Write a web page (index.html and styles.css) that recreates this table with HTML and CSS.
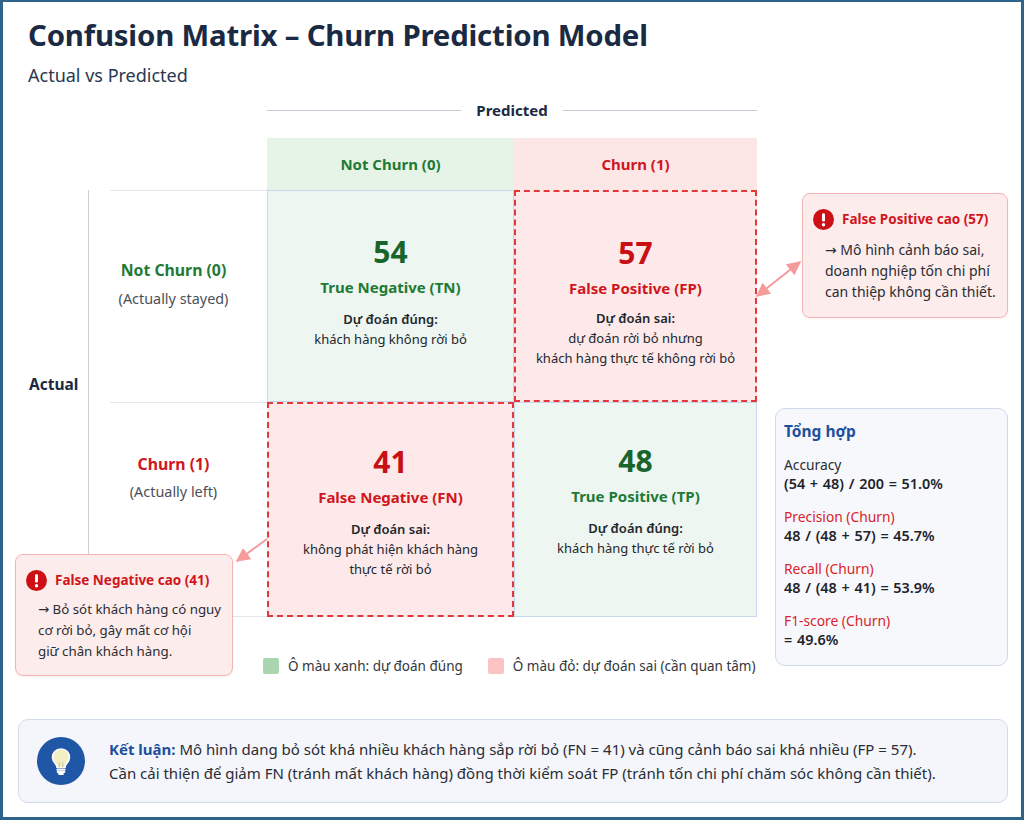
FILE: index.html
```html
<!DOCTYPE html>
<html lang="vi">
<head>
<meta charset="utf-8">
<title>Confusion Matrix – Churn Prediction Model</title>
<link rel="stylesheet" href="styles.css">
</head>
<body>
<div class="frame">
  <header class="head">
    <h1 class="title">Confusion Matrix – Churn Prediction Model</h1>
    <p class="subtitle">Actual vs Predicted</p>
  </header>

  <section class="board">
    <div class="pred-axis">
      <span class="axis-line"></span>
      <span class="axis-label">Predicted</span>
      <span class="axis-line"></span>
    </div>

    <div class="col-head col-neg">Not Churn (0)</div>
    <div class="col-head col-pos">Churn (1)</div>

    <div class="actual-label">Actual</div>

    <div class="row-axis">
      <div class="row-head row-neg">
        <div class="row-title green">Not Churn (0)</div>
        <div class="row-sub">(Actually stayed)</div>
      </div>
      <div class="row-head row-pos">
        <div class="row-title red">Churn (1)</div>
        <div class="row-sub">(Actually left)</div>
      </div>
    </div>

    <div class="cell cell-ok cell-tn">
      <div class="num green-dark">54</div>
      <div class="cell-label green">True Negative (TN)</div>
      <div class="desc"><span class="desc-head">Dự đoán đúng:</span><br>khách hàng không rời bỏ</div>
    </div>
    <div class="cell cell-bad cell-fp">
      <div class="num red-dark">57</div>
      <div class="cell-label red">False Positive (FP)</div>
      <div class="desc desc-tight"><span class="desc-head">Dự đoán sai:</span><br>dự đoán rời bỏ nhưng<br>khách hàng thực tế không rời bỏ</div>
    </div>
    <div class="cell cell-bad cell-fn">
      <div class="num red-dark">41</div>
      <div class="cell-label red">False Negative (FN)</div>
      <div class="desc"><span class="desc-head">Dự đoán sai:</span><br>không phát hiện khách hàng<br>thực tế rời bỏ</div>
    </div>
    <div class="cell cell-ok cell-tp">
      <div class="num green-dark">48</div>
      <div class="cell-label green">True Positive (TP)</div>
      <div class="desc"><span class="desc-head">Dự đoán đúng:</span><br>khách hàng thực tế rời bỏ</div>
    </div>

    <aside class="callout callout-fp">
      <div class="callout-title">
        <svg class="warn" viewBox="0 0 20 20" aria-hidden="true"><circle cx="10" cy="10" r="10" fill="#cc1016"/><rect x="8.6" y="4" width="2.8" height="8" rx="1.2" fill="#fff"/><circle cx="10" cy="15" r="1.6" fill="#fff"/></svg>
        <span>False Positive cao (57)</span>
      </div>
      <p class="callout-body">→ Mô hình cảnh báo sai,<br>doanh nghiệp tốn chi phí<br>can thiệp không cần thiết.</p>
    </aside>

    <aside class="summary">
      <h2 class="summary-title">Tổng hợp</h2>
      <div class="metric">
        <div class="metric-name">Accuracy</div>
        <div class="metric-val">(54 + 48) / 200 = 51.0%</div>
      </div>
      <div class="metric">
        <div class="metric-name red-soft">Precision (Churn)</div>
        <div class="metric-val">48 / (48 + 57) = 45.7%</div>
      </div>
      <div class="metric">
        <div class="metric-name red-soft">Recall (Churn)</div>
        <div class="metric-val">48 / (48 + 41) = 53.9%</div>
      </div>
      <div class="metric">
        <div class="metric-name red-soft">F1-score (Churn)</div>
        <div class="metric-val">= 49.6%</div>
      </div>
    </aside>

    <div class="legend">
      <span class="legend-item"><span class="swatch swatch-green"></span>Ô màu xanh: dự đoán đúng</span>
      <span class="legend-item"><span class="swatch swatch-red"></span>Ô màu đỏ: dự đoán sai (cần quan tâm)</span>
    </div>

    <aside class="callout callout-fn">
      <div class="callout-title">
        <svg class="warn" viewBox="0 0 20 20" aria-hidden="true"><circle cx="10" cy="10" r="10" fill="#cc1016"/><rect x="8.6" y="4" width="2.8" height="8" rx="1.2" fill="#fff"/><circle cx="10" cy="15" r="1.6" fill="#fff"/></svg>
        <span>False Negative cao (41)</span>
      </div>
      <p class="callout-body">→ Bỏ sót khách hàng có nguy<br>cơ rời bỏ, gây mất cơ hội<br>giữ chân khách hàng.</p>
    </aside>

    <svg class="arrows" viewBox="0 0 1018 577" aria-hidden="true">
      <defs>
        <marker id="ah" viewBox="0 0 10 10" refX="9" refY="5" markerWidth="7" markerHeight="7" orient="auto-start-reverse">
          <path d="M0 0 L10 5 L0 10 z" fill="#f59b9b"/>
        </marker>
      </defs>
      <line x1="754" y1="196" x2="797" y2="162" stroke="#f59b9b" stroke-width="2" marker-start="url(#ah)" marker-end="url(#ah)"/>
      <line x1="264" y1="439" x2="234" y2="461" stroke="#f59b9b" stroke-width="2" marker-end="url(#ah)"/>
    </svg>
  </section>

  <section class="conclusion">
    <div class="bulb">
      <svg viewBox="0 0 48 48" aria-hidden="true">
        <circle cx="24" cy="24" r="24" fill="#1f56a6"/>
        <path d="M24 12 C18.8 12 15.5 15.8 15.5 20.2 C15.5 23.4 17.3 25.3 18.6 26.9 C19.6 28.1 20 29.3 20 30.6 L28 30.6 C28 29.3 28.4 28.1 29.4 26.9 C30.7 25.3 32.5 23.4 32.5 20.2 C32.5 15.8 29.2 12 24 12 Z" fill="#f2efc4" stroke="#ffffff" stroke-width="1.6" stroke-linejoin="round"/>
        <path d="M22.3 30.4 L22.3 25.5 M25.7 30.4 L25.7 25.5" stroke="#c9c08a" stroke-width="1" fill="none"/>
        <path d="M20.2 32.8 H27.8 M20.6 35 H27.4" stroke="#ffffff" stroke-width="1.8" stroke-linecap="round"/>
        <path d="M22 37 H26" stroke="#ffffff" stroke-width="1.8" stroke-linecap="round"/>
      </svg>
    </div>
    <p class="conclusion-text"><strong class="blue">Kết luận:</strong> Mô hình dang bỏ sót khá nhiều khách hàng sắp rời bỏ (FN = 41) và cũng cảnh báo sai khá nhiều (FP = 57).<br>Cần cải thiện để giảm FN (tránh mất khách hàng) đồng thời kiểm soát FP (tránh tốn chi phí chăm sóc không cần thiết).</p>
  </section>
</div>
</body>
</html>
```

FILE: styles.css
```css
* { box-sizing: border-box; }

html, body {
  margin: 0;
  padding: 0;
  background: #ffffff;
}

body {
  font-family: "Noto Sans", "Open Sans", "DejaVu Sans", sans-serif;
  color: #222831;
}

.frame {
  width: 1024px;
  height: 820px;
  border: 3px solid #2e6489;
  border-top-width: 2px;
  background: #ffffff;
  overflow: hidden;
}

/* Header */
.head {
  padding: 13px 0 0 25px;
}

.title {
  margin: 0;
  font-size: 29.4px;
  line-height: 40px;
  font-weight: 700;
  color: #1a2a42;
  letter-spacing: -0.2px;
}

.subtitle {
  margin: 8px 0 0;
  font-size: 18px;
  line-height: 24px;
  color: #2a3850;
}

/* Board grid */
.board {
  position: relative;
  margin-top: 13px;
  display: grid;
  grid-template-columns: 85px 179px 247px 243px 18px 233px;
  grid-template-rows: 38px 52px 212px 215px 60px;
}

.pred-axis {
  grid-column: 3 / 5;
  grid-row: 1;
  align-self: start;
  height: 20px;
  display: flex;
  align-items: center;
  gap: 15px;
}

.axis-line {
  flex: 1;
  height: 1px;
  background: #c5ccd6;
}

.axis-label {
  font-size: 15px;
  font-weight: 700;
  line-height: 20px;
  color: #1a2a42;
}

.col-head {
  grid-row: 2;
  display: flex;
  align-items: center;
  justify-content: center;
  font-size: 15px;
  font-weight: 700;
}

.col-neg {
  grid-column: 3;
  background: #e6f3e7;
  color: #1e7a35;
}

.col-pos {
  grid-column: 4;
  background: #fde6e6;
  color: #d0161d;
}

.actual-label {
  grid-column: 1;
  grid-row: 3 / 5;
  align-self: start;
  margin-top: 183px;
  padding-left: 26px;
  font-size: 15.5px;
  font-weight: 700;
  line-height: 22px;
  color: #1a2a42;
}

.row-axis {
  grid-column: 2;
  grid-row: 3 / 5;
  border-left: 1px solid #c9ced6;
  display: grid;
  grid-template-rows: 212px 215px;
}

.row-head {
  margin-left: 21px;
  padding-right: 30px;
  border-top: 1px solid #e3e6eb;
  text-align: center;
}

.row-neg { padding-top: 68px; }
.row-pos {
  padding-top: 50px;
  border-bottom: 1px solid #e3e6eb;
}

.row-title {
  font-size: 15.8px;
  font-weight: 700;
  line-height: 22px;
}

.row-sub {
  margin-top: 7px;
  font-size: 14.4px;
  line-height: 22px;
  color: #4a4f57;
}

.row-pos .row-sub { margin-top: 6px; }

.green { color: #1e7a35; }
.green-dark { color: #17652c; }
.red { color: #d0161d; }
.red-dark { color: #c80f14; }
.red-soft { color: #d9232a; }
.blue { color: #1d4f9c; }

/* Cells */
.cell {
  text-align: center;
  padding-top: 43px;
}

.cell-fn,
.cell-tp { padding-top: 40px; }

.cell-ok {
  background: #edf6f0;
  border: 1px solid #c8d7ec;
}

.cell-bad {
  background: #fde9e9;
  border: 2px dashed #e3383a;
  position: relative;
  z-index: 1;
}

.cell-tn { grid-column: 3; grid-row: 3; }
.cell-fp { grid-column: 4; grid-row: 3; }
.cell-fn { grid-column: 3; grid-row: 4; }
.cell-tp { grid-column: 4; grid-row: 4; }

.num {
  font-size: 30px;
  line-height: 36px;
  font-weight: 700;
}

.cell-label {
  margin-top: 6px;
  font-size: 15px;
  line-height: 22px;
  font-weight: 700;
}

.desc {
  margin-top: 11px;
  font-size: 13px;
  line-height: 20px;
  color: #23272e;
}

.desc-tight { margin-top: 9px; }

.desc-head {
  font-weight: 600;
}

/* Callouts */
.callout {
  background: #fdecec;
  border: 1.5px solid #f4b4b4;
  border-radius: 8px;
  padding: 14px 0 0 10px;
  box-shadow: 0 1px 3px rgba(220, 80, 80, 0.08);
}

.callout-fp {
  grid-column: 6;
  grid-row: 3;
  align-self: start;
  margin-top: 3px;
  margin-left: 27px;
  height: 125px;
}

.callout-fn {
  position: absolute;
  left: 12px;
  top: 454px;
  width: 218px;
  height: 122px;
  z-index: 3;
}

.callout-title {
  display: flex;
  align-items: center;
  gap: 8px;
  font-size: 13.5px;
  line-height: 22px;
  font-weight: 700;
  color: #d0161d;
}

.warn {
  width: 21px;
  height: 21px;
  flex: none;
}

.callout-body {
  margin: 9px 0 0 12px;
  font-size: 14px;
  line-height: 21px;
  color: #2a2d33;
  white-space: nowrap;
}

.callout-fn .callout-body {
  margin-top: 8px;
  font-size: 13.3px;
}

/* Summary */
.summary {
  grid-column: 6;
  grid-row: 4 / 6;
  align-self: start;
  margin-top: 6px;
  height: 258px;
  background: #f6f8fc;
  border: 1.5px solid #cfd9ea;
  border-radius: 10px;
  padding: 12px 8px;
}

.summary-title {
  margin: 0;
  font-size: 15.5px;
  line-height: 20px;
  font-weight: 700;
  color: #1d4f9c;
}

.metric {
  margin-top: 14px;
}

.metric-name,
.metric-val {
  font-size: 13.8px;
  line-height: 19px;
}

.metric-name { color: #2a2d33; }
.metric-name.red-soft { color: #d9232a; }

.metric-val {
  font-size: 14.4px;
  font-weight: 600;
  color: #1f232a;
  word-spacing: 1px;
}

/* Legend */
.legend {
  grid-column: 3 / 6;
  grid-row: 5;
  padding-top: 37px;
  margin-left: -4px;
  display: flex;
  gap: 25px;
  font-size: 13.5px;
  line-height: 20px;
  color: #33373d;
}

.legend-item {
  display: flex;
  align-items: center;
  gap: 9px;
}

.swatch {
  width: 16px;
  height: 16px;
  border-radius: 2px;
}

.swatch-green { background: #a9d5b1; }
.swatch-red { background: #fbc4c4; }

/* Arrows overlay */
.arrows {
  position: absolute;
  left: 0;
  top: 0;
  width: 1018px;
  height: 577px;
  pointer-events: none;
  z-index: 4;
}

/* Conclusion */
.conclusion {
  margin: 42px 0 0 15px;
  width: 990px;
  height: 84px;
  background: #f4f6fb;
  border: 1.5px solid #d2dbee;
  border-radius: 10px;
  display: flex;
  align-items: center;
  padding-left: 18px;
  gap: 24px;
}

.bulb {
  width: 48px;
  height: 48px;
  flex: none;
}

.bulb svg {
  width: 48px;
  height: 48px;
  display: block;
}

.conclusion-text {
  margin: 0;
  font-size: 15px;
  line-height: 24px;
  color: #2a2d33;
}

.conclusion-text strong { font-weight: 700; }
```
